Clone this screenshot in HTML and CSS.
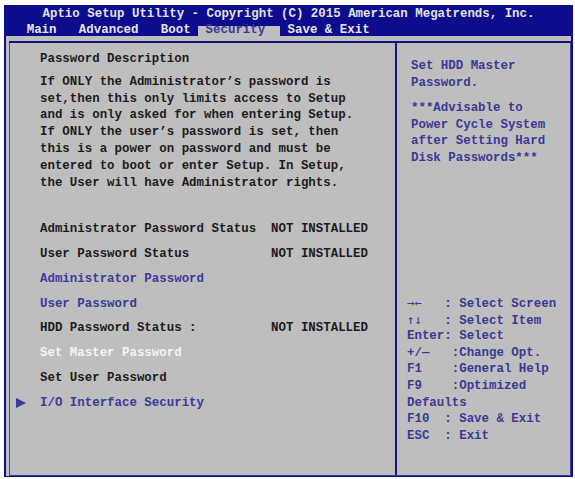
FILE: index.html
```html
<!DOCTYPE html>
<html>
<head>
<meta charset="utf-8">
<link rel="stylesheet" href="styles.css">
</head>
<body>
<div class="screen">
  <div class="title">Aptio Setup Utility - Copyright (C) 2015 American Megatrends, Inc.</div>
  <div class="menu">Main   Advanced   Boot <span class="tab"> Security  </span> Save &amp; Exit</div>
  <div class="content">
    <div class="panels">
      <div class="left">
        <div class="desc">
          <div class="desc-title">Password Description</div>
          <div class="desc-body">If ONLY the Administrator’s password is<br>set,then this only limits access to Setup<br>and is only asked for when entering Setup.<br>If ONLY the user’s password is set, then<br>this is a power on password and must be<br>entered to boot or enter Setup. In Setup,<br>the User will have Administrator rights.</div>
        </div>
        <div class="items">
          <div class="row"><span class="mark"></span><span class="label">Administrator Password Status</span><span class="value">NOT INSTALLED</span></div>
          <div class="row"><span class="mark"></span><span class="label">User Password Status</span><span class="value">NOT INSTALLED</span></div>
          <div class="row link"><span class="mark"></span><span class="label">Administrator Password</span><span class="value"></span></div>
          <div class="row link"><span class="mark"></span><span class="label">User Password</span><span class="value"></span></div>
          <div class="row"><span class="mark"></span><span class="label">HDD Password Status :</span><span class="value">NOT INSTALLED</span></div>
          <div class="row selected"><span class="mark"></span><span class="label">Set Master Password</span><span class="value"></span></div>
          <div class="row"><span class="mark"></span><span class="label">Set User Password</span><span class="value"></span></div>
          <div class="row link"><span class="mark"><svg class="tri" width="10" height="10" viewBox="0 0 10 10"><polygon points="0,0 10,5 0,10" fill="#3b3b9c"/></svg></span><span class="label">I/O Interface Security</span><span class="value"></span></div>
        </div>
      </div>
      <div class="right">
        <div class="help-desc">
          <p>Set HDD Master<br>Password.</p>
          <p class="p2">***Advisable to<br>Power Cycle System<br>after Setting Hard<br>Disk Passwords***</p>
        </div>
        <div class="keys">
          <div class="key"><span class="arr">→←</span>   : Select Screen</div>
          <div class="key"><span class="arr">↑↓</span>   : Select Item</div>
          <div class="key">Enter: Select</div>
          <div class="key">+/—   :Change Opt.</div>
          <div class="key">F1    :General Help</div>
          <div class="key">F9    :Optimized</div>
          <div class="key">Defaults</div>
          <div class="key">F10  : Save &amp; Exit</div>
          <div class="key">ESC  : Exit</div>
        </div>
      </div>
    </div>
  </div>
</div>
</body>
</html>
```
FILE: styles.css
```css
* { box-sizing: border-box; }

body {
  margin: 0;
  background: #ffffff;
  font-family: "Liberation Mono", "Courier New", monospace;
  font-weight: bold;
  font-size: 12.43px;
}

.screen {
  margin: 5px 0 0 4px;
  width: 569px;
  height: 472px;
  background: #0c0c8c;
  display: flex;
  flex-direction: column;
}

.title {
  height: 16px;
  padding-top: 2px;
  line-height: 14px;
  text-align: center;
  color: #e2e2e2;
  white-space: pre;
}

.menu {
  height: 15px;
  padding-top: 3px;
  padding-left: 22.7px;
  line-height: 13px;
  color: #e6e6e6;
  white-space: pre;
}

.tab {
  color: #3b3b99;
  background: linear-gradient(to bottom, transparent 3.5px, #bebebe 3.5px);
}

.content {
  flex: 1;
  margin: 0 2px 1px 2px;
  background: #bebebe;
  padding: 5px 0 0 3px;
  display: flex;
}

.panels {
  flex: 1;
  display: flex;
  border-top: 2px solid #14147a;
  border-bottom: 1px solid #3a3a9a;
}

.left {
  width: 388px;
  border-left: 1px solid #4a4aa0;
  border-right: 2px solid #14147a;
}

.desc {
  padding: 7.8px 0 0 30px;
  line-height: 16.8px;
  color: #1c1c1c;
}

.desc-body { margin-top: 6.3px; }

.items { margin-top: 25.5px; }

.row {
  display: grid;
  grid-template-columns: 30px 31ch 1fr;
  height: 24.86px;
  line-height: 24.86px;
  color: #1c1c1c;
  white-space: pre;
}

.row.link { color: #3b3b99; }
.row.selected { color: #f4f4f4; }

.mark { display: block; }
.tri { display: block; margin: 7px 0 0 6px; }

.right {
  flex: 1;
  border-right: 1px solid #3a3a9a;
  padding: 15.3px 0 0 10px;
  color: #3a3a94;
}

.help-desc { margin-left: 4px; line-height: 16.7px; }
.help-desc p { margin: 0; }
.help-desc .p2 { margin-top: 8.3px; }

.keys {
  margin-top: 128.3px;
}

.key {
  height: 16.58px;
  line-height: 16.58px;
  white-space: pre;
}

.arr {
  font-family: "DejaVu Sans Mono", monospace;
  font-weight: normal;
  font-size: 12.38px;
}
```
